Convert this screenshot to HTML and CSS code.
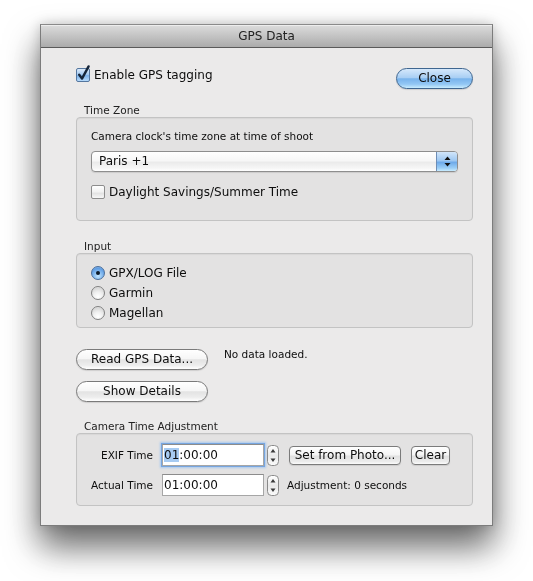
FILE: index.html
```html
<!DOCTYPE html>
<html>
<head>
<meta charset="utf-8">
<title>GPS Data</title>
<link rel="stylesheet" href="styles.css">
</head>
<body>
<div class="stage">
  <div class="window">
    <div class="titlebar">GPS Data</div>
    <div class="content">
      <div class="toprow">
        <div class="check">
          <span class="cb cb-on"><svg width="14" height="14" viewBox="0 0 14 14"><path d="M3.2 6.8 L6 10.6 L12.6 -1.6" fill="none" stroke="#16263a" stroke-width="2.4" stroke-linecap="round" stroke-linejoin="round"/></svg></span>
          <span>Enable GPS tagging</span>
        </div>
        <div class="pill pill-blue close">Close</div>
      </div>

      <div class="glabel">Time Zone</div>
      <div class="gbox tzbox">
        <div class="small tzline">Camera clock's time zone at time of shoot</div>
        <div class="popup">
          <span class="popup-text">Paris +1</span>
          <span class="popup-arrows"><svg width="9" height="13" viewBox="0 0 9 13"><path d="M4.5 1.5 L7.5 5 L1.5 5 Z M4.5 11.5 L7.5 8 L1.5 8 Z" fill="#111"/></svg></span>
        </div>
        <div class="check dst">
          <span class="cb"></span>
          <span>Daylight Savings/Summer Time</span>
        </div>
      </div>

      <div class="glabel">Input</div>
      <div class="gbox inbox">
        <div class="radio-row"><span class="rb rb-on"><span class="dot"></span></span><span>GPX/LOG File</span></div>
        <div class="radio-row"><span class="rb"></span><span>Garmin</span></div>
        <div class="radio-row"><span class="rb"></span><span>Magellan</span></div>
      </div>

      <div class="btnrow first">
        <div class="pill wide">Read GPS Data...</div>
        <div class="small status">No data loaded.</div>
      </div>
      <div class="btnrow">
        <div class="pill wide">Show Details</div>
      </div>

      <div class="glabel">Camera Time Adjustment</div>
      <div class="gbox ctbox">
        <div class="trow">
          <div class="small tlabel">EXIF Time</div>
          <div class="tfield focus"><span class="sel">01</span>:00:00</div>
          <span class="stepper"><svg width="12" height="21" viewBox="0 0 12 21"><defs><linearGradient id="sg" x1="0" y1="0" x2="0" y2="1"><stop offset="0" stop-color="#ffffff"/><stop offset="0.5" stop-color="#e9e9e9"/><stop offset="1" stop-color="#fbfbfb"/></linearGradient></defs><rect x="0.5" y="0.5" width="11" height="20" rx="4" fill="url(#sg)" stroke="#8a8a8a"/><path d="M6 4 L8.5 7.5 L3.5 7.5 Z M6 17 L8.5 13.5 L3.5 13.5 Z" fill="#3a3a3a"/></svg></span>
          <div class="rbtn setphoto">Set from Photo...</div>
          <div class="rbtn clear">Clear</div>
        </div>
        <div class="trow">
          <div class="small tlabel">Actual Time</div>
          <div class="tfield">01:00:00</div>
          <span class="stepper"><svg width="12" height="21" viewBox="0 0 12 21"><rect x="0.5" y="0.5" width="11" height="20" rx="4" fill="url(#sg)" stroke="#8a8a8a"/><path d="M6 4 L8.5 7.5 L3.5 7.5 Z M6 17 L8.5 13.5 L3.5 13.5 Z" fill="#3a3a3a"/></svg></span>
          <div class="small adj">Adjustment: 0 seconds</div>
        </div>
      </div>
    </div>
  </div>
</div>
</body>
</html>
```

FILE: styles.css
```css
html, body {
  margin: 0;
  padding: 0;
  background: #ffffff;
}

body {
  font-family: "Lucida Grande", "DejaVu Sans", sans-serif;
  font-size: 12px;
  color: #0d0d0d;
}

.stage {
  padding: 24px 0 60px 40px;
  min-height: 497px;
}

.window {
  box-sizing: border-box;
  width: 453px;
  border: 1px solid #7c7c7c;
  border-top-color: #8a8a8a;
  background: #ebeaea;
  filter: drop-shadow(0 20px 17px rgba(0, 0, 0, 0.55)) drop-shadow(0 0 6px rgba(0, 0, 0, 0.2));
}

.titlebar {
  height: 22px;
  line-height: 22px;
  text-align: center;
  color: #222;
  font-size: 12px;
  background: linear-gradient(#dcdcdc 0%, #c6c6c6 45%, #ababab 100%);
  border-bottom: 1px solid #5a5a5a;
  box-shadow: inset 0 1px 0 #ededed;
}

.content {
  padding: 19px 19px 19px 35px;
}

.toprow {
  display: flex;
  justify-content: space-between;
  align-items: flex-start;
  height: 22px;
}

.check {
  display: flex;
  align-items: center;
  gap: 4px;
  height: 16px;
  line-height: 16px;
}

.cb {
  box-sizing: border-box;
  width: 14px;
  height: 14px;
  border: 1px solid #8d8d8d;
  border-radius: 2px;
  background: linear-gradient(#ffffff 0%, #f1f1f1 50%, #e2e2e2 60%, #f7f7f7 100%);
  flex: none;
  display: block;
  position: relative;
}

.cb-on {
  border-color: #55779f;
  background: linear-gradient(#dbeafa 0%, #a5cbf2 45%, #7db2ea 55%, #b5dafb 100%);
}

.cb-on svg {
  position: absolute;
  left: -1px;
  top: -1px;
  overflow: visible;
}

.pill {
  box-sizing: border-box;
  height: 21px;
  line-height: 19px;
  border: 1px solid #7a7a7a;
  border-radius: 11px;
  text-align: center;
  background: linear-gradient(#ffffff 0%, #f6f6f6 45%, #e3e3e3 52%, #ededed 80%, #ffffff 100%);
  box-shadow: 0 1px 1px rgba(0, 0, 0, 0.12);
}

.pill-blue {
  border-color: #3f6690;
  background: linear-gradient(#d5e8fb 0%, #a9cff4 45%, #78b3ec 52%, #93c7f4 80%, #c8ecfe 100%);
}

.close {
  width: 77px;
  margin-top: 1px;
}

.glabel {
  font-size: 10.5px;
  line-height: 14px;
  height: 14px;
  color: #222;
  padding-left: 8px;
  margin-top: 14px;
}

.gbox + .glabel {
  margin-top: 18px;
}

.gbox {
  box-sizing: border-box;
  border: 1px solid #c3c3c3;
  border-radius: 4px;
  background: #e3e2e2;
  box-shadow: inset 0 1px 1px rgba(0, 0, 0, 0.05);
}

.small {
  font-size: 10.5px;
}

.tzbox {
  height: 104px;
  padding: 10px 14px 0 14px;
}

.tzline {
  line-height: 16px;
  height: 16px;
}

.popup {
  box-sizing: border-box;
  margin-top: 7px;
  height: 21px;
  border: 1px solid #8e8e8e;
  border-radius: 4px;
  background: linear-gradient(#ffffff 0%, #f7f7f7 45%, #ebebeb 55%, #f6f6f6 85%, #ffffff 100%);
  display: flex;
  align-items: center;
  justify-content: space-between;
  overflow: hidden;
  box-shadow: 0 1px 1px rgba(0, 0, 0, 0.1);
}

.popup-text {
  padding-left: 7px;
  line-height: 19px;
}

.popup-arrows {
  width: 20px;
  height: 19px;
  display: flex;
  align-items: center;
  justify-content: center;
  border-left: 1px solid #6d8db6;
  background: linear-gradient(#d2e6fa 0%, #9ec8f2 45%, #6fabea 55%, #9ccff7 85%, #c9ecff 100%);
}

.dst {
  margin-top: 12px;
}

.inbox {
  height: 75px;
  padding: 9px 14px 0 14px;
}

.radio-row {
  display: flex;
  align-items: center;
  gap: 4px;
  height: 20px;
  line-height: 20px;
}

.rb {
  box-sizing: border-box;
  width: 14px;
  height: 14px;
  border-radius: 50%;
  border: 1px solid #808080;
  background: radial-gradient(circle at 50% 80%, #ffffff 0%, #f0f0f0 40%, #d8d8d8 75%, #f4f4f4 100%);
  display: flex;
  align-items: center;
  justify-content: center;
  flex: none;
}

.rb-on {
  border-color: #4a6e9a;
  background: radial-gradient(circle at 50% 75%, #c3e6ff 0%, #7fb6ee 45%, #5f9de3 70%, #a9cdf4 100%);
}

.dot {
  width: 4px;
  height: 4px;
  border-radius: 50%;
  background: #0c1a2a;
}

.btnrow {
  display: flex;
  align-items: flex-start;
  gap: 16px;
  margin-top: 11px;
}

.btnrow.first {
  margin-top: 21px;
}

.wide {
  width: 132px;
}

.status {
  line-height: 11px;
}

.btnrow + .glabel {
  margin-top: 17px;
}

.ctbox {
  height: 73px;
  padding: 8px 0 0 10px;
}

.trow {
  display: flex;
  align-items: center;
  height: 26px;
}

.trow + .trow {
  margin-top: 4px;
}

.tlabel {
  width: 66px;
  text-align: right;
  margin-right: 9px;
}

.tfield {
  box-sizing: border-box;
  width: 102px;
  height: 22px;
  line-height: 20px;
  padding-left: 1px;
  background: #fff;
  border: 1px solid #a6a6a6;
  border-top-color: #8c8c8c;
}

.tfield.focus {
  box-shadow: 0 0 0 1px #77a6e0, 0 0 2px 2px #a9c9ef;
}

.sel {
  background: #a7cbf2;
}

.stepper {
  margin-left: 3px;
  width: 12px;
  height: 21px;
  display: block;
}

.rbtn {
  box-sizing: border-box;
  height: 19px;
  line-height: 17px;
  border: 1px solid #7b7b7b;
  border-radius: 4px;
  text-align: center;
  background: linear-gradient(#ffffff 0%, #f4f4f4 45%, #e1e1e1 55%, #ececec 85%, #fbfbfb 100%);
  box-shadow: 0 1px 1px rgba(0, 0, 0, 0.1);
}

.setphoto {
  width: 112px;
  margin-left: 10px;
}

.clear {
  width: 39px;
  margin-left: 10px;
}

.adj {
  margin-left: 8px;
}
```
